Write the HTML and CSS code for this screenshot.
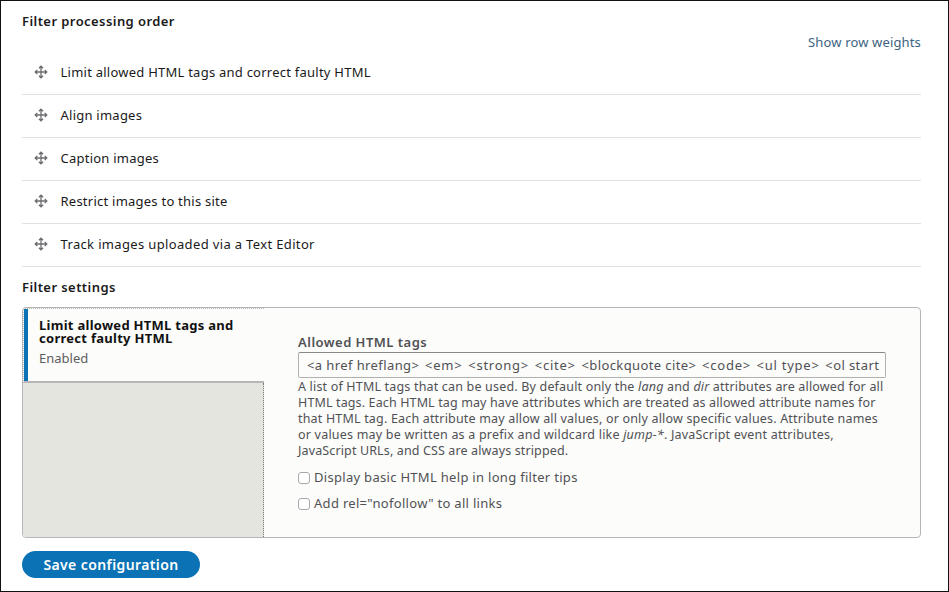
FILE: index.html
```
<!DOCTYPE html>
<html lang="en">
<head>
<meta charset="utf-8">
<title>Filter configuration</title>
<link rel="stylesheet" href="styles.css">
</head>
<body>
<svg class="sprite" aria-hidden="true">
  <symbol id="move" viewBox="0 0 14 14">
    <path d="M7 1.2v11.6M1.2 7h11.6M4.9 3.3 7 1.2l2.1 2.1M4.9 10.7 7 12.8l2.1-2.1M3.3 4.9 1.2 7l2.1 2.1M10.7 4.9 12.8 7l-2.1 2.1"/>
  </symbol>
</svg>
<main class="page">
  <h2 class="heading">Filter processing order</h2>
  <div class="weights"><a class="link">Show row weights</a></div>
  <ul class="order">
    <li class="row"><svg class="handle"><use href="#move"/></svg><span>Limit allowed HTML tags and correct faulty HTML</span></li>
    <li class="row"><svg class="handle"><use href="#move"/></svg><span>Align images</span></li>
    <li class="row"><svg class="handle"><use href="#move"/></svg><span>Caption images</span></li>
    <li class="row"><svg class="handle"><use href="#move"/></svg><span>Restrict images to this site</span></li>
    <li class="row"><svg class="handle"><use href="#move"/></svg><span>Track images uploaded via a Text Editor</span></li>
  </ul>
  <h2 class="heading settings-heading">Filter settings</h2>
  <section class="tabs">
    <div class="menu">
      <div class="tab">
        <strong class="tab-title">Limit allowed HTML tags and correct faulty HTML</strong>
        <span class="tab-summary">Enabled</span>
      </div>
      <div class="menu-rest"></div>
    </div>
    <div class="pane">
      <div class="label">Allowed HTML tags</div>
      <div class="input" role="textbox" contenteditable="true" spellcheck="false"><span class="tight">&lt;a href hreflang&gt;</span> <span class="loose">&lt;em&gt;</span> <span>&lt;strong&gt;</span> <span>&lt;cite&gt;</span> <span class="tight">&lt;blockquote cite&gt;</span> <span>&lt;code&gt;</span> <span>&lt;ul type&gt;</span> <span class="tight">&lt;ol start</span></div>
      <p class="description"><span class="wide">A list of HTML tags that can be used. By default only the <em>lang</em> and <em>dir</em> attributes are allowed for all</span><br>HTML tags. Each HTML tag may have attributes which are treated as allowed attribute names for<br><span class="wide">that HTML tag. Each attribute may allow all values, or only allow specific values. Attribute names</span><br><span class="wider">or values may be written as a prefix and wildcard like <em>jump-*</em>. JavaScript event attributes,</span><br>JavaScript URLs, and CSS are always stripped.</p>
      <label class="check"><input class="box" type="checkbox"><span>Display basic HTML help in long filter tips</span></label>
      <label class="check"><input class="box" type="checkbox"><span>Add rel="nofollow" to all links</span></label>
    </div>
  </section>
  <button class="save" type="button">Save configuration</button>
</main>
</body>
</html>
```
FILE: styles.css
```
* { box-sizing: border-box; }
body {
  margin: 0;
  background: #fff;
  color: #1a1a1a;
  font: 13px/20px "Noto Sans", "Open Sans", sans-serif;
}
.sprite { display: none; }
.page {
  height: 592px;
  padding: 10px 27px 0 21px;
  border: 1px solid #111;
  overflow: hidden;
}
.heading {
  margin: 0;
  font-size: 13px;
  line-height: 20px;
  font-weight: 600;
  letter-spacing: 0.43px;
}
.weights { height: 20px; margin-top: 1px; text-align: right; }
.link { color: #3c637f; letter-spacing: 0.15px; }
.order { margin: 0; padding: 0; list-style: none; }
.row {
  display: flex;
  align-items: center;
  height: 43px;
  padding: 0 0 3px 12px;
  border-bottom: 1px solid #e1e1e1;
  letter-spacing: 0.24px;
}
.row:last-child { letter-spacing: 0.35px; }
.handle {
  width: 14px;
  height: 14px;
  margin-right: 12.5px;
  fill: none;
  stroke: #6c6d70;
  stroke-width: 1.3;
}
.settings-heading { margin-top: 10px; }
.tabs {
  display: flex;
  height: 231px;
  margin-top: 10px;
  border: 1px solid #b6b6b6;
  border-radius: 4px;
  background: #fcfcfa;
  overflow: hidden;
}
.menu { display: flex; flex-direction: column; width: 241px; }
.tab {
  height: 75px;
  padding: 10px 0 0 15px;
  border-top: 1px dotted #bbb;
  border-bottom: 2px solid #b6b6b6;
  border-left: 1px dotted #ccc;
  box-shadow: inset 4px 0 #0a72b5;
}
.tab-title {
  display: block;
  width: 205px;
  color: #111;
  font-weight: 700;
  line-height: 13px;
  letter-spacing: 0.28px;
}
.tab-summary { display: block; margin-top: 3px; color: #5d5d60; }
.menu-rest { flex: 1; background: #e5e5e0; border-right: 1px dotted #777; }
.pane { flex: 1; padding: 24px 34px 0 34px; color: #505155; }
.label { height: 20px; font-weight: 600; letter-spacing: 0.48px; }
.input {
  width: 588px;
  height: 26px;
  padding: 2px 0 0 8px;
  border: 1px solid #b0b0b0;
  border-top-color: #88888c;
  border-radius: 2px;
  white-space: nowrap;
  overflow: hidden;
  word-spacing: 2.3px;
}
.input span { word-spacing: 0; letter-spacing: 0.75px; }
.input .tight { letter-spacing: 0.4px; }
.input .loose { letter-spacing: 0.8px; }
.description {
  margin: 1px 0 8px;
  font-size: 12.5px;
  line-height: 16px;
  letter-spacing: 0.13px;
  white-space: nowrap;
}
.wide { letter-spacing: 0.18px; }
.wider { letter-spacing: 0.21px; }
.check {
  display: flex;
  align-items: center;
  height: 20px;
  margin-bottom: 6px;
  letter-spacing: 0.3px;
}
.box {
  appearance: none;
  width: 12px;
  height: 12px;
  margin: 1px 4px 0 0;
  border: 1px solid #aaa;
  border-radius: 3px;
  background: #fff;
}
.save {
  display: block;
  width: 178px;
  height: 27px;
  margin-top: 13px;
  padding: 0;
  border: 0;
  border-radius: 14px;
  background: #0a72b5;
  color: #fff;
  font: 600 14px/27px "Noto Sans", "Open Sans", sans-serif;
  letter-spacing: 0.4px;
}
```
